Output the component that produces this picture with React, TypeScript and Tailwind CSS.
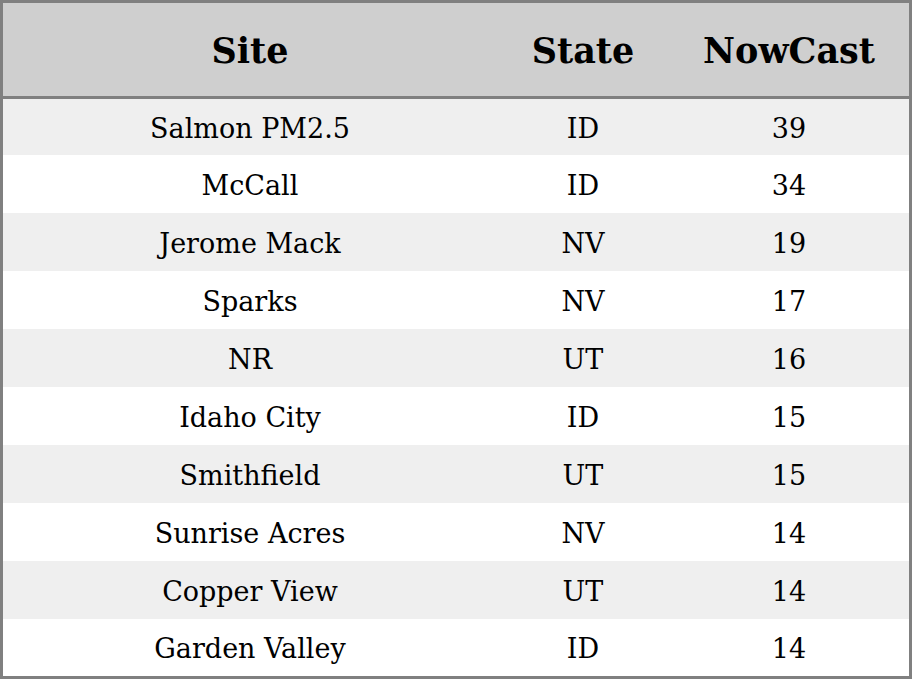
const rows: [string, string, number][] = [
  ["Salmon PM2.5", "ID", 39],
  ["McCall", "ID", 34],
  ["Jerome Mack", "NV", 19],
  ["Sparks", "NV", 17],
  ["NR", "UT", 16],
  ["Idaho City", "ID", 15],
  ["Smithfield", "UT", 15],
  ["Sunrise Acres", "NV", 14],
  ["Copper View", "UT", 14],
  ["Garden Valley", "ID", 14],
];

const heights = [
  "h-[56px]",
  "h-[58px]",
  "h-[58px]",
  "h-[58px]",
  "h-[58px]",
  "h-[58px]",
  "h-[58px]",
  "h-[58px]",
  "h-[58px]",
  "h-[57px]",
];

export default function App() {
  return (
    <div className="w-[912px] h-[679px] overflow-hidden bg-white font-['DejaVu_Serif',serif] text-black">
      <div className="border-[3px] border-[#808080]">
        <div className="flex h-[96px] items-center pt-[3px] bg-[#cfcfcf] border-b-[3px] border-[#808080] text-[35px] font-bold">
          <div className="w-[494px] text-center">Site</div>
          <div className="w-[172px] text-center">State</div>
          <div className="flex-1 text-center">NowCast</div>
        </div>
        {rows.map(([site, state, value], i) => (
          <div
            key={site}
            className={`flex items-center pt-[4px] text-[27px] ${heights[i]} ${i % 2 === 0 ? "bg-[#efefef]" : "bg-white"}`}
          >
            <div className="w-[494px] text-center">{site}</div>
            <div className="w-[172px] text-center">{state}</div>
            <div className="flex-1 text-center">{value}</div>
          </div>
        ))}
      </div>
    </div>
  );
}
